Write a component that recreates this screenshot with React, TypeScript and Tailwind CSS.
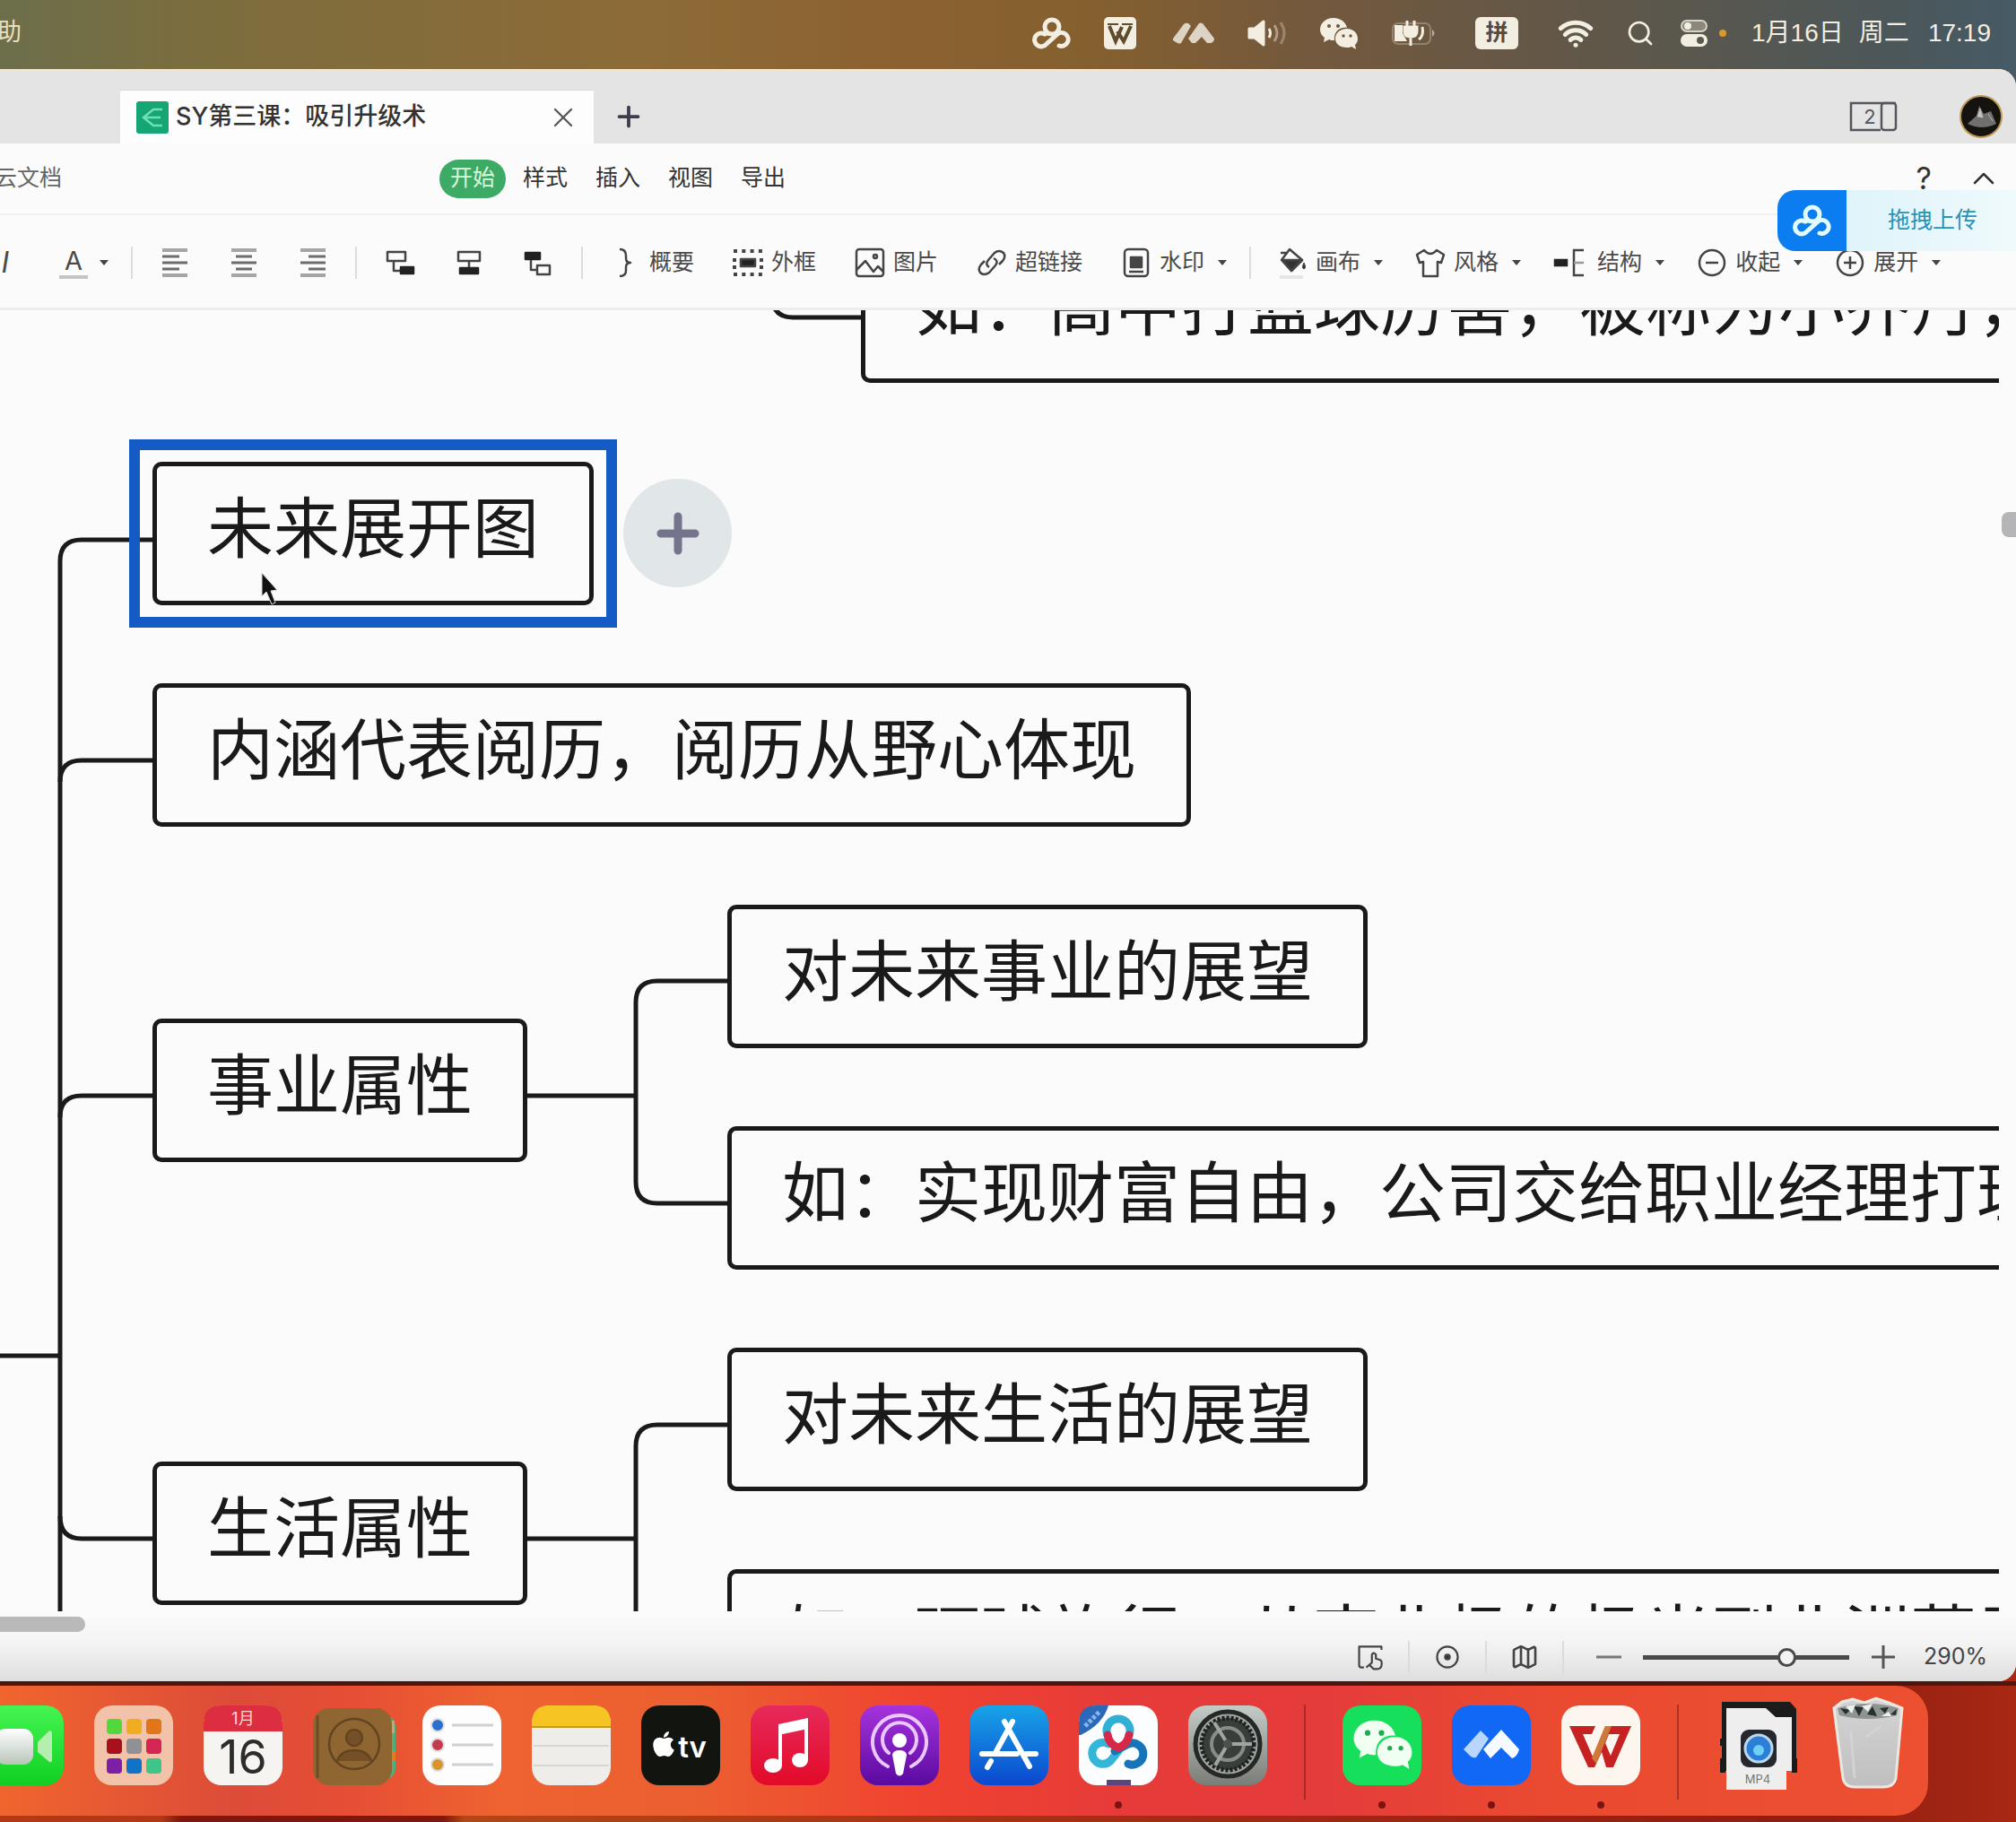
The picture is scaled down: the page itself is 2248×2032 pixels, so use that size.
import type { ReactNode } from "react";
import { ChevronUp, Map as MapIcon, Plus, Search, Wifi, X } from "lucide-react";
import { FaApple } from "react-icons/fa";

type TopicNode = {
  text: string;
  className: string;
};

const topics: TopicNode[] = [
  { text: "如：高中打篮球厉害，被称为小乔丹，", className: "left-[960px] top-[-79px]" },
  { text: "未来展开图", className: "left-[170px] top-[169px]" },
  { text: "内涵代表阅历，阅历从野心体现", className: "left-[170px] top-[416px]" },
  { text: "对未来事业的展望", className: "left-[811px] top-[663px]" },
  { text: "事业属性", className: "left-[170px] top-[790px]" },
  { text: "如：实现财富自由，公司交给职业经理打理", className: "left-[811px] top-[910px]" },
  { text: "对未来生活的展望", className: "left-[811px] top-[1157px]" },
  { text: "生活属性", className: "left-[170px] top-[1284px]" },
  { text: "如：环球旅行，从南北极的极光到北洲草原", className: "left-[811px] top-[1404px]" },
];

const connectors = [
  "M860 -20 Q860 8 884 8 H962",
  "M67 1600 V280 Q67 256 91 256 H172",
  "M67 526 Q67 502 91 502 H172",
  "M67 900 Q67 876 91 876 H172",
  "M67 1345 Q67 1370 91 1370 H172",
  "M0 1166 H67",
  "M586 876 H709",
  "M813 748 H733 Q709 748 709 772 V972 Q709 996 733 996 H813",
  "M586 1370 H709",
  "M813 1243 H733 Q709 1243 709 1267 V1600",
];

/* ---------- shared glyphs ---------- */

function CloudDiskIcon({ className }: { className: string }) {
  return (
    <svg viewBox="0 0 44 38" className={className} fill="none" stroke="currentColor" strokeWidth="5" strokeLinecap="round">
      <circle cx="22" cy="12" r="8" />
      <path d="M17 19 L14 20 A7.5 7.5 0 1 0 16 31 L27 21 A7.5 7.5 0 1 1 30 33" />
    </svg>
  );
}

function ChatBubbles({ className, eye }: { className: string; eye: string }) {
  return (
    <svg viewBox="0 0 44 38" className={className}>
      <path d="M16 2 C7 2 1 8 1 15 C1 19 3 22 6 24 L5 29 L11 26 C12 27 15 27 17 27 C16 17 23 12 31 13 C30 7 24 2 16 2Z" fill="currentColor" />
      <path d="M31 14 C23 14 18 19 18 25 C18 31 23 35 31 35 C33 35 34 35 36 34 L41 37 L40 32 C42 30 43 28 43 25 C43 19 38 14 31 14Z" fill="currentColor" />
      <g fill={eye}>
        <circle cx="11" cy="11" r="2" />
        <circle cx="21" cy="11" r="2" />
        <circle cx="27" cy="22" r="1.7" />
        <circle cx="35" cy="22" r="1.7" />
      </g>
    </svg>
  );
}

function Caret() {
  return (
    <svg viewBox="0 0 12 8" className="h-2 w-3 shrink-0">
      <path d="M1 1 H11 L6 7Z" fill="#444" />
    </svg>
  );
}

/* ---------- system menu bar ---------- */

function MenuBar() {
  return (
    <header className="flex h-[77px] shrink-0 items-center justify-between overflow-hidden bg-[linear-gradient(90deg,#6c6f4b_0%,#7c6d3e_10%,#8d6b36_32%,#8b612f_45%,#85602f_54%,#75593c_64%,#5f574a_80%,#4c575a_94%,#465b66_100%)] pb-1 text-[#f3eee2]">
      <span className="flex w-6 justify-end overflow-hidden text-[27px] whitespace-nowrap text-[#e9dfbf]">帮助</span>
      <div className="flex items-center pr-7">
        <span className="flex w-[76px] justify-center">
          <CloudDiskIcon className="h-[38px] w-[44px]" />
        </span>
        <span className="flex w-[76px] justify-center">
          <svg viewBox="0 0 36 36" className="size-9">
            <rect width="36" height="36" rx="5" fill="#f3eee2" />
            <path d="M4 8 H16 M20 8 H32" stroke="#5f4c2c" strokeWidth="2" />
            <path d="M6 10 L13 27 L20 11 M15 16 L22 27 L30 10" fill="none" stroke="#5f4c2c" strokeWidth="4" />
          </svg>
        </span>
        <span className="flex w-[88px] justify-center">
          <svg viewBox="0 0 48 26" className="h-[26px] w-12" fill="#ded4c6">
            <path d="M1 19 L13 3 Q15 1 18 2 L21 5 L10 24 Q8 25 6 24 L1 21Z" />
            <path d="M18 19 L30 2 Q32 1 34 2 L47 19 Q47 23 43 24 L39 24 L33 17 L26 24 L22 24Z" />
          </svg>
        </span>
        <span className="flex w-[76px] justify-center">
          <svg viewBox="0 0 44 30" className="h-[30px] w-11" fill="none" stroke="#f3eee2" strokeWidth="3">
            <path d="M2 10 H8 L18 2 V28 L8 20 H2Z" fill="#f3eee2" strokeLinejoin="round" />
            <path d="M24 10 Q27 15 24 20" />
            <path d="M30 6 Q36 15 30 24" opacity=".45" />
            <path d="M37 3 Q45 15 37 27" opacity=".3" />
          </svg>
        </span>
        <span className="flex w-[84px] justify-center">
          <ChatBubbles className="h-[38px] w-11" eye="#67543f" />
        </span>
        <span className="flex w-[84px] justify-center">
          <svg viewBox="0 0 52 30" className="h-[30px] w-[52px]">
            <rect x="2" y="4" width="42" height="23" rx="6" fill="none" stroke="#b9b0a0" strokeWidth="2" opacity=".5" />
            <path d="M46 11 Q51 15 46 19Z" fill="#b9b0a0" />
            <path d="M4 6 H13 V15 L18 24 H4Z" fill="#f3eee2" />
            <path d="M18 1 V8 M26 1 V8 M15 8 H29 V13 Q29 19 22 19 Q15 19 15 13Z M22 18 V29" fill="#f3eee2" stroke="#f3eee2" strokeWidth="3" />
            <path d="M31 22 Q37 18 35 8" fill="none" stroke="#f3eee2" strokeWidth="3" />
          </svg>
        </span>
        <span className="flex w-[100px] justify-center">
          <span className="flex h-[36px] w-12 items-center justify-center rounded-md bg-[#f3eee2] text-[25px] font-bold text-[#514b42]">拼</span>
        </span>
        <span className="flex w-[76px] justify-center">
          <Wifi className="size-10" strokeWidth={3} />
        </span>
        <span className="flex w-[68px] justify-center">
          <Search className="size-8" strokeWidth={2} />
        </span>
        <span className="flex w-[52px] justify-center">
          <svg viewBox="0 0 32 32" className="size-8">
            <rect x="2" y="2" width="28" height="12" rx="6" fill="#8c877c" stroke="#d8d2c5" strokeWidth="2" />
            <circle cx="9" cy="8" r="4" fill="#f3eee2" />
            <rect x="1" y="17" width="30" height="14" rx="7" fill="#f3eee2" />
            <circle cx="23" cy="24" r="4" fill="#5a5850" />
          </svg>
        </span>
        <span className="mr-[28px] ml-0.5 size-2 rounded-full bg-[#d9992b]" />
        <time className="flex w-[267px] justify-between font-['Liberation_Sans','Noto_Sans_CJK_SC',sans-serif] text-[28px] whitespace-nowrap">
          <span>1月16日</span>
          <span>周二</span>
          <span className="pl-1">17:19</span>
        </time>
      </div>
    </header>
  );
}

/* ---------- document tabs ---------- */

function TabStrip() {
  return (
    <div className="flex h-[83px] shrink-0 items-end justify-between border-t-2 border-[#f1e6d6] bg-[#e4e4e4] pl-[134px]">
      <div className="flex items-center">
        <div className="flex h-[60px] w-[528px] items-center border-t border-[#d5d7dc] bg-[#fdfdfd] pr-4 pl-[18px]">
          <svg viewBox="0 0 36 36" className="size-9">
            <rect width="36" height="36" rx="3" fill="#15a673" />
            <path d="M29 9 H19 L8 18 L19 27 H29 M9 18 H27" fill="none" stroke="#6fe0b5" strokeWidth="2.500" />
          </svg>
          <span className="ml-2 grow text-[27px] font-medium text-[#333]">SY第三课：吸引升级术</span>
          <button aria-label="关闭标签">
            <X className="size-9 text-[#555]" strokeWidth={1.5} />
          </button>
        </div>
        <button aria-label="新建标签" className="ml-[21px]">
          <Plus className="size-9 text-[#3c3c4a]" strokeWidth={2.5} />
        </button>
      </div>
      <div className="flex h-[60px] items-center gap-[68px] pr-[14px]">
        <svg viewBox="0 0 54 34" className="h-[34px] w-[54px]" fill="none" stroke="#55565c" strokeWidth="2.500">
          <path d="M35 32 H2 V2 H52" />
          <rect x="36" y="2" width="16" height="30" rx="3" />
          <text x="23" y="25" textAnchor="middle" fontSize="22" fill="#55565c" stroke="none">2</text>
        </svg>
        <svg viewBox="0 0 50 50" className="size-[50px]">
          <circle cx="25" cy="25" r="23" fill="#15130f" stroke="#c09a55" strokeWidth="2" />
          <path d="M10 33 L20 24 L23 13 L28 22 L36 19 L42 33 Q26 41 10 33Z" fill="#6f6f6d" />
          <path d="M21 25 L24 16 L27 26Z M33 22 L38 30" fill="#c5c5c2" stroke="#b5b5b2" />
        </svg>
      </div>
    </div>
  );
}

function RibbonTabs() {
  return (
    <nav className="relative flex h-20 shrink-0 items-center border-b-2 border-[#f1f1f1] text-[25px] text-[#333]">
      <span className="flex w-[69px] justify-end overflow-hidden whitespace-nowrap text-[#666]">云文档</span>
      <div className="ml-[421px] flex items-center gap-[31px]">
        <button className="-mr-3 h-[43px] w-[74px] rounded-full bg-[#3dab65] text-[#d9f8de]">开始</button>
        <button>样式</button>
        <button>插入</button>
        <button>视图</button>
        <button>导出</button>
      </div>
      <div className="ml-auto flex items-center gap-[38px] pr-4">
        <button aria-label="帮助" className="text-[34px] leading-none">?</button>
        <button aria-label="收起功能区">
          <ChevronUp className="size-10" strokeWidth={1.5} />
        </button>
      </div>

      {/* floating upload widget */}
      <button className="absolute top-[52px] right-0 z-10 flex h-[68px] w-[266px] items-center overflow-hidden rounded-l-[20px] bg-[linear-gradient(90deg,#d8f1fa,#effafc)] text-[#2793b5]">
        <span className="flex h-full w-[77px] items-center justify-center bg-[#0b7df0] text-[#e2fbff]">
          <CloudDiskIcon className="h-[38px] w-[44px]" />
        </span>
        <span className="pl-[46px]">拖拽上传</span>
      </button>
    </nav>
  );
}

/* ---------- toolbar ---------- */

function Divider() {
  return <span className="h-9 w-0.5 shrink-0 bg-[#dcdcdc]" />;
}

function Tool({ icon, label, menu }: { icon: ReactNode; label: string; menu?: boolean }) {
  return (
    <button className="flex shrink-0 items-center gap-2 whitespace-nowrap">
      {icon}
      <span>{label}</span>
      {menu && (
        <span className="pl-1.5">
          <Caret />
        </span>
      )}
    </button>
  );
}

function ToolSvg({ children, className = "size-9" }: { children: ReactNode; className?: string }) {
  return (
    <svg viewBox="0 0 36 36" className={className} fill="none" stroke="#444" strokeWidth="2.5" strokeLinejoin="round">
      {children}
    </svg>
  );
}

function AlignButton({ d, label }: { d: string; label: string }) {
  return (
    <button aria-label={label}>
      <svg viewBox="0 0 28 32" className="h-8 w-7" fill="none" strokeWidth="4">
        <path d="M0 2 H28 M0 30 H28" stroke="#a5a5a5" />
        <path d={d} stroke="#6c6c6c" strokeWidth="3" />
      </svg>
    </button>
  );
}

function Toolbar() {
  return (
    <div className="flex h-[106px] shrink-0 items-center overflow-hidden border-b-[3px] border-[#ededed] pt-0.5 text-[25px] text-[#4a4a4a]">
      <button className="flex w-2.5 justify-end text-[32px] italic">I</button>
      <button aria-label="字体颜色" className="ml-[56px] flex items-center gap-3">
        <span className="w-8 border-b-4 border-[#c4c4c4] text-center text-[29px] leading-[32px]">A</span>
        <Caret />
      </button>
      <div className="ml-6 flex items-center">
        <Divider />
        <div className="mx-[33px] flex gap-[49px]">
          <AlignButton label="左对齐" d="M0 9 H19 M0 16 H28 M0 23 H19" />
          <AlignButton label="居中" d="M5 9 H23 M0 16 H28 M5 23 H23" />
          <AlignButton label="右对齐" d="M9 9 H28 M0 16 H28 M9 23 H28" />
        </div>
        <Divider />
      </div>
      <div className="mx-[30px] flex gap-[41px]">
        <button aria-label="子主题">
          <ToolSvg>
            <path d="M4 6 H24 V16 H4Z M11 16 V27 H20" />
            <path d="M19 23 H33 V30 H19Z" fill="#222" stroke="#222" />
          </ToolSvg>
        </button>
        <button aria-label="同级主题">
          <ToolSvg>
            <path d="M6 6 H30 V16 H6Z M18 16 V23" />
            <path d="M8 24 H28 V30 H8Z" fill="#222" stroke="#222" />
          </ToolSvg>
        </button>
        <button aria-label="父主题">
          <ToolSvg>
            <path d="M4 7 H20 V14 H4Z" fill="#222" stroke="#222" />
            <path d="M10 15 V26 H16 M17 21 H31 V31 H17Z" />
          </ToolSvg>
        </button>
      </div>
      <Divider />
      <div className="mr-6 ml-[30px] flex gap-[42px]">
        <Tool
          label="概要"
          icon={
            <ToolSvg>
              <path d="M11 3 Q18 3 18 10 V13 Q18 18 23 18 Q18 18 18 23 V27 Q18 33 11 33" />
            </ToolSvg>
          }
        />
        <Tool
          label="外框"
          icon={
            <ToolSvg>
              <path d="M2 5 H34 M2 31 H34" strokeDasharray="4 5.3" strokeWidth="4" />
              <path d="M3 13 V26 M33 13 V26" strokeDasharray="4 4" strokeWidth="4" />
              <rect x="10" y="14" width="16" height="8" fill="#222" />
            </ToolSvg>
          }
        />
        <Tool
          label="图片"
          icon={
            <ToolSvg>
              <rect x="3" y="3" width="30" height="30" rx="3" />
              <path d="M3 26 L13 16 L22 28 L27 22 L33 28" />
              <circle cx="24" cy="11" r="2" />
            </ToolSvg>
          }
        />
        <Tool
          label="超链接"
          icon={
            <ToolSvg>
              <path d="M15 23 Q10 20 14 15 L21 7 Q26 3 31 7 Q34 11 30 16 L26 20 M20 13 Q26 16 22 21 L15 29 Q9 33 5 29 Q2 25 6 20 L10 16" />
            </ToolSvg>
          }
        />
        <Tool
          menu
          label="水印"
          icon={
            <ToolSvg>
              <rect x="5" y="3" width="26" height="30" rx="4" />
              <rect x="12" y="12" width="12" height="11" fill="#444" />
              <path d="M10 28 H26" />
            </ToolSvg>
          }
        />
      </div>
      <Divider />
      <div className="ml-7 flex gap-[34px]">
        <Tool
          menu
          label="画布"
          icon={
            <ToolSvg>
              <path d="M5 7 H13 M15 3 L29 15 L17 27 L6 15Z" />
              <path d="M7 15 H29 L17 27Z" fill="#333" />
              <path d="M31 18 Q34 24 31 25 Q28 24 31 18Z" fill="#333" strokeWidth="1" />
              <path d="M4 34 H30" stroke="#e6e6e6" strokeWidth="4" />
            </ToolSvg>
          }
        />
        <Tool
          menu
          label="风格"
          icon={
            <ToolSvg>
              <path d="M11 4 L3 9 L6 18 L10 17 V33 H26 V17 L30 18 L33 9 L25 4 Q18 12 11 4Z" />
            </ToolSvg>
          }
        />
        <Tool
          menu
          label="结构"
          icon={
            <svg viewBox="0 0 42 36" className="h-9 w-[42px]" fill="none" stroke="#444" strokeWidth="2.5">
              <path d="M3 15 H16 V21 H3Z" fill="#222" stroke="#222" />
              <path d="M35 4 H24 V32 H35" />
              <path d="M24 18 H35" stroke="#999" />
            </svg>
          }
        />
        <Tool
          menu
          label="收起"
          icon={
            <ToolSvg>
              <circle cx="18" cy="18" r="14" />
              <path d="M11 18 H25" />
            </ToolSvg>
          }
        />
        <Tool
          menu
          label="展开"
          icon={
            <ToolSvg>
              <circle cx="18" cy="18" r="14" />
              <path d="M11 18 H25 M18 11 V25" />
            </ToolSvg>
          }
        />
      </div>
    </div>
  );
}

/* ---------- mind map ---------- */

function MindMap() {
  return (
    <main className="relative min-h-[900px] flex-1">
      <div className="absolute inset-y-0 right-[19px] left-0 overflow-hidden">
        <svg className="absolute inset-0 size-full" fill="none" stroke="#1a1a1a" strokeWidth="5">
          {connectors.map((d) => (
            <path key={d} d={d} />
          ))}
        </svg>
        {/* selection frame */}
        <div className="absolute top-[144px] left-[144px] h-[210px] w-[544px] border-[12px] border-[#155bc6]" />
        {topics.map((topic) => (
          <div
            key={topic.text}
            className={`absolute flex h-[160px] items-center rounded-[10px] border-[5px] border-[#1a1a1a] px-14 pb-3 text-[74px] leading-none whitespace-nowrap text-[#1a1a1a] ${topic.className}`}
          >
            {topic.text}
          </div>
        ))}
        <button aria-label="添加子主题" className="absolute top-[188px] left-[695px] flex size-[121px] items-center justify-center rounded-full bg-[#e1e6e8]">
          <svg viewBox="0 0 48 48" className="size-12" stroke="#74748c" strokeWidth="9" strokeLinecap="round">
            <path d="M5 24 H43 M24 5 V43" />
          </svg>
        </button>
        <svg viewBox="0 0 22 38" className="absolute top-[292px] left-[290px] h-[38px] w-[22px]">
          <path d="M2 1 V27 L7 22 L13 36 L17 34 L12 21 L19 20Z" fill="#111" stroke="#ddd" strokeWidth="1" />
        </svg>
      </div>
      <div className="absolute top-[225px] right-0 h-7 w-4 rounded-l-lg bg-[#b5b5b8]" />
    </main>
  );
}

function StatusBar() {
  return (
    <footer className="relative flex h-[78px] shrink-0 items-center justify-end bg-[linear-gradient(180deg,#fbfbfb_0%,#f4f4f4_45%,#dedede_100%)] pt-6 pr-8 text-[25px] text-[#444]">
      <div className="absolute top-[6px] left-0 h-[17px] w-[95px] rounded-r-full bg-[#b9b9b9]" />
      <div className="flex items-center gap-[26px]">
        <button aria-label="手势">
          <ToolSvg className="size-8">
            <path d="M10 31 H7 Q4 31 4 28 V5 H32 V9 M13 31 L20 25 V15 Q22 11 25 15 V20 L31 22 Q33 24 32 29 Q31 33 27 33 H22 L16 27" />
          </ToolSvg>
        </button>
        <Divider />
        <button aria-label="定位中心">
          <ToolSvg className="size-8">
            <circle cx="18" cy="18" r="13" />
            <circle cx="18" cy="18" r="3" fill="#333" />
          </ToolSvg>
        </button>
        <Divider />
        <button aria-label="导航">
          <MapIcon className="size-8" strokeWidth={2} />
        </button>
        <Divider />
      </div>
      <button aria-label="缩小" className="ml-9">
        <svg viewBox="0 0 28 28" className="size-7">
          <path d="M0 14 H28" stroke="#777" strokeWidth="3" />
        </svg>
      </button>
      <input
        type="range"
        aria-label="缩放"
        min={0}
        max={100}
        defaultValue={72}
        className="mx-6 h-6 w-[230px] appearance-none bg-transparent [&::-webkit-slider-runnable-track]:h-[5px] [&::-webkit-slider-runnable-track]:bg-[#4a4a4a] [&::-webkit-slider-thumb]:-mt-2 [&::-webkit-slider-thumb]:size-[21px] [&::-webkit-slider-thumb]:appearance-none [&::-webkit-slider-thumb]:rounded-full [&::-webkit-slider-thumb]:border-[3px] [&::-webkit-slider-thumb]:border-[#4a4a4a] [&::-webkit-slider-thumb]:bg-[#f4f4f4]"
      />
      <button aria-label="放大">
        <svg viewBox="0 0 28 28" className="size-7">
          <path d="M1 14 H27 M14 1 V27" stroke="#555" strokeWidth="3" />
        </svg>
      </button>
      <span className="ml-[30px] w-[72px] text-right">290%</span>
    </footer>
  );
}

/* ---------- dock ---------- */

function DockApp({ name, running, children }: { name: string; running?: boolean; children: ReactNode }) {
  return (
    <button aria-label={name} className="flex w-[90px] shrink-0 flex-col items-center gap-[18px]">
      <svg viewBox="0 0 90 90" className="size-[90px] shrink-0 overflow-visible">
        {children}
      </svg>
      <span className={`size-2 rounded-full ${running ? "bg-[#7c1311]" : ""}`} />
    </button>
  );
}

function Tile({ fill }: { fill: string }) {
  return <rect x="1" y="1" width="88" height="89" rx="20" fill={fill} />;
}

const launchpadColors = ["#52d83c", "#f0ad20", "#e0751a", "#a8101c", "#8f9195", "#d42652", "#7c1ea6", "#1173c8", "#3fc489"];

const gradients = [
  { id: "gFace", from: "#45f552", to: "#10cf22" },
  { id: "gMusic", from: "#e62a5b", to: "#e30a28" },
  { id: "gPod", from: "#a633dd", to: "#5a0aa0" },
  { id: "gStore", from: "#18a4e8", to: "#0b47cf" },
  { id: "gGear", from: "#c4ccc8", to: "#7b7d77" },
  { id: "gTrash", from: "#d4d4d4", to: "#bfbfbf" },
  { id: "gCam", from: "#ffffff", to: "#b9c5b9" },
];

function Dock() {
  return (
    <section aria-label="程序坞" className="shrink-0 overflow-hidden border-t-[5px] border-[#4d160f] bg-[linear-gradient(90deg,#b03a18_0%,#b03a18_8%,#7d170f_9%,#7d170f_22%,#b04818_23%,#a32a15_60%,#8f1d12_90%,#a82812_100%)] pb-[7px]">
      <svg className="absolute size-0">
        <defs>
          {gradients.map((g) => (
            <linearGradient key={g.id} id={g.id} x1="0" y1="0" x2="0" y2="1">
              <stop offset="0" stopColor={g.from} />
              <stop offset="1" stopColor={g.to} />
            </linearGradient>
          ))}
        </defs>
      </svg>
      <div className="mr-[98px] flex h-[145px] items-start gap-8 overflow-hidden rounded-r-[36px] bg-[linear-gradient(90deg,#f0652e_0%,#dd4c38_12%,#e64e35_18%,#ee6330_26%,#ec5f30_36%,#f04230_48%,#e63b39_58%,#e43b3b_68%,#ea4a30_80%,#ec5030_100%)] pt-[21px]">
        <span className="flex w-[72px] shrink-0 justify-end">
          <DockApp name="FaceTime">
            <Tile fill="url(#gFace)" />
            <rect x="13" y="27" width="42" height="40" rx="11" fill="url(#gCam)" />
            <path d="M60 42 L73 29 Q76 29 76 32 V62 Q76 65 73 64 L60 53Z" fill="#b5eeae" />
          </DockApp>
        </span>
        <DockApp name="启动台">
          <Tile fill="#f2c3a8" />
          {launchpadColors.map((color, i) => (
            <rect key={color} x={15 + (i % 3) * 22} y={16 + Math.floor(i / 3) * 22} width="17" height="17" rx="4" fill={color} />
          ))}
        </DockApp>
        <DockApp name="日历">
          <Tile fill="#f6f4f0" />
          <path d="M1 30 V21 Q1 1 21 1 H69 Q89 1 89 21 V30Z" fill="#dc2e40" />
          <text x="45" y="22" textAnchor="middle" fontSize="18" fill="#ffd9d4">1月</text>
          <text x="45" y="77" textAnchor="middle" fontSize="52" fill="#2c2c2c">16</text>
        </DockApp>
        <DockApp name="通讯录">
          <path d="M86 14 Q93 16 93 26 V70 Q93 80 86 82Z" fill="#4fae7c" />
          <path d="M88 18 H92 V32 H88Z" fill="#b8a97e" />
          <path d="M88 52 H93 V62 H88Z" fill="#e07d1c" />
          <rect x="1" y="4" width="88" height="86" rx="18" fill="#8f6632" />
          <path d="M6 12 V82" stroke="#6e4d25" strokeWidth="3" />
          <g fill="none" stroke="#644420" strokeWidth="2.5">
            <circle cx="47" cy="44" r="28" />
            <circle cx="47" cy="37" r="9" fill="#755026" />
            <path d="M28 63 Q32 51 47 51 Q62 51 66 63" fill="#755026" />
          </g>
        </DockApp>
        <DockApp name="提醒事项">
          <Tile fill="#fdfdfd" />
          {["#2a6fd0", "#c43a4c", "#d8952e"].map((color, i) => (
            <g key={color}>
              <circle cx="18" cy={23 + i * 22} r="7" fill={color} stroke="#ddd" strokeWidth="2" />
              <path d={`M34 ${23 + i * 22} H80`} stroke="#cfcfd6" strokeWidth="3" />
            </g>
          ))}
        </DockApp>
        <DockApp name="备忘录">
          <Tile fill="#eeede9" />
          <path d="M1 25 V21 Q1 1 21 1 H69 Q89 1 89 21 V25Z" fill="#f6c423" />
          <path d="M1 25 H89" stroke="#c09a28" strokeWidth="2" />
          <path d="M3 46 H87 M3 68 H87" stroke="#d8d6d0" strokeWidth="2" />
        </DockApp>
        <DockApp name="Apple TV">
          <Tile fill="#12140f" />
          <FaApple x="10" y="28" size="32" color="#fff" />
          <text x="58" y="59" textAnchor="middle" fontSize="33" fontWeight="600" fill="#fff">tv</text>
        </DockApp>
        <DockApp name="音乐">
          <Tile fill="url(#gMusic)" />
          <path d="M34 68 V25 L63 18 V62" fill="none" stroke="#fff" strokeWidth="4" />
          <path d="M32 22 L65 15 V27 L32 34Z" fill="#fff" />
          <ellipse cx="26" cy="68" rx="10" ry="8" fill="#fff" />
          <ellipse cx="56" cy="62" rx="9" ry="8" fill="#fff" />
        </DockApp>
        <DockApp name="播客">
          <Tile fill="url(#gPod)" />
          <g fill="none" stroke="#eac8ff" strokeWidth="4" strokeLinecap="round">
            <path d="M32 69 A30 30 0 1 1 58 69" />
            <path d="M33 54 A19 19 0 1 1 57 54" />
          </g>
          <circle cx="45" cy="40" r="8" fill="#fff" />
          <path d="M37 56 Q38 51 45 51 Q52 51 53 56 L49 77 Q45 82 41 77Z" fill="#fff" />
        </DockApp>
        <DockApp name="App Store">
          <Tile fill="url(#gStore)" />
          <path d="M40 19 L68 69 M49 19 L31 52 M15 55 H54 M64 55 H75 M25 63 L21 70" stroke="#fff" strokeWidth="6" strokeLinecap="round" />
        </DockApp>
        <DockApp name="百度网盘" running>
          <Tile fill="#fbfdff" />
          <path d="M1 34 V21 Q1 1 21 1 H34 Q28 22 3 34Z" fill="#2b68b8" />
          <path d="M8 24 L25 7" stroke="#85b7ea" strokeWidth="5" strokeDasharray="4 2" />
          <g fill="none" strokeWidth="9" strokeLinecap="round">
            <path d="M45 52 L37 62 A12 12 0 1 1 34 44" stroke="#33b6d8" />
            <path d="M41 52 L56 44 A12 12 0 1 1 56 66" stroke="#1675b8" />
            <path d="M33 34 A13 13 0 1 1 57 34" stroke="#2fb0d4" />
            <path d="M33 34 Q35 45 45 48 Q55 45 57 34" stroke="#d8284a" />
          </g>
          <path d="M32 84 H59 V90 H32Z" fill="#5d4480" />
        </DockApp>
        <DockApp name="系统设置">
          <Tile fill="url(#gGear)" />
          <circle cx="45" cy="44" r="36" fill="#a0a39f" stroke="#242826" strokeWidth="5" />
          <circle cx="45" cy="44" r="29" fill="#393e3b" stroke="#1d211f" strokeWidth="5" strokeDasharray="3 2" />
          <circle cx="45" cy="44" r="18" fill="none" stroke="#878c88" strokeWidth="4" />
          <path d="M45 44 H72 M45 44 L30 20 M45 44 L31 68" stroke="#9fa5a1" strokeWidth="4" />
          <circle cx="45" cy="44" r="5" fill="#4c514e" />
        </DockApp>
        <span className="mx-2 h-[106px] w-0.5 shrink-0 bg-[#a82a26]" />
        <DockApp name="微信" running>
          <Tile fill="#16df5c" />
          <g color="#f0fff2">
            <svg x="12" y="14" width="68" height="60">
              <ChatBubbles className="h-[60px] w-[68px]" eye="#24a852" />
            </svg>
          </g>
        </DockApp>
        <DockApp name="腾讯会议" running>
          <Tile fill="#1068f4" />
          <path d="M14 50 L33 29 L42 38 L28 59 Q24 60 21 57Z" fill="#b9d6ff" />
          <path d="M36 50 L56 28 L76 50 Q74 58 68 60 L56 48 L44 60Z" fill="#f5faff" />
        </DockApp>
        <DockApp name="WPS Office" running>
          <Tile fill="#fdf6ee" />
          <path d="M10 24 H39 L35 33 H25 L36 58 L50 24 H79 L59 70 H51 L46 53 L38 70 H31Z" fill="#c62222" />
          <path d="M54 33 H66 L56 57 L50 43Z" fill="#fdf6ee" />
          <path d="M40 66 L57 24 H50 L35 60Z" fill="#d07a3a" />
        </DockApp>
        <span className="mr-3 ml-2 h-[106px] w-0.5 shrink-0 bg-[#a93220]" />
        <DockApp name="视频文件">
          <path d="M4 -3 H80 L87 5 V74 H4Z" fill="#1b1b1b" />
          <path d="M9 4 H53 L64 14 H82 V74 H76 V95 H9Z" fill="#eeeeef" />
          <path d="M2 38 H7 V46 H2Z M2 60 H8 V76 H2Z M82 60 H88 V76 H82Z" fill="#1b1b1b" />
          <rect x="25" y="28" width="40" height="42" rx="9" fill="#25282c" />
          <circle cx="45" cy="49" r="15" fill="#2b7fd6" stroke="#bcd7ee" strokeWidth="3" />
          <circle cx="45" cy="51" r="6" fill="#6fd0f5" />
          <text x="44" y="88" textAnchor="middle" fontSize="13" fill="#777">MP4</text>
        </DockApp>
        <DockApp name="废纸篓">
          <path d="M7 4 L16 -3 L28 -6 L41 -2 L54 -7 L68 -2 L83 4 L76 82 Q74 92 62 92 H30 Q19 92 17 82Z" fill="url(#gTrash)" stroke="#ebe8e2" strokeWidth="3" />
          <path d="M11 4 Q45 -6 79 4 L77 12 Q45 20 13 12Z" fill="#8e9490" />
          <path d="M14 4 L20 11 L25 6 Z M29 2 L35 13 L40 3Z M44 11 L50 2 L55 13Z M58 4 L64 10 L68 3Z M70 11 L77 5 L76 12Z" fill="#26302c" />
          <path d="M20 2 L27 10 L31 0Z M38 2 L45 8 L50 -1Z M60 13 L68 8 L71 13Z" fill="#eef1ef" />
          <path d="M60 24 L42 36 M26 30 L30 82" stroke="#d3d3d3" strokeWidth="3" fill="none" />
        </DockApp>
      </div>
    </section>
  );
}

export default function App() {
  return (
    <div className="flex min-h-screen w-full flex-col overflow-hidden bg-[#8f1f12] font-['Inter','Noto_Sans_CJK_SC',sans-serif]">
      <MenuBar />
      {/* MAIN WINDOW */}
      <div className="flex flex-1 flex-col bg-[linear-gradient(180deg,#4a5a62_0%,#4a5a62_50%,#a82812_50%)]">
        <div className="flex flex-1 flex-col overflow-hidden rounded-r-[20px] bg-[#fbfbfb]">
          <TabStrip />
          <RibbonTabs />
          <Toolbar />
          <MindMap />
          <StatusBar />
        </div>
      </div>
      <Dock />
    </div>
  );
}
